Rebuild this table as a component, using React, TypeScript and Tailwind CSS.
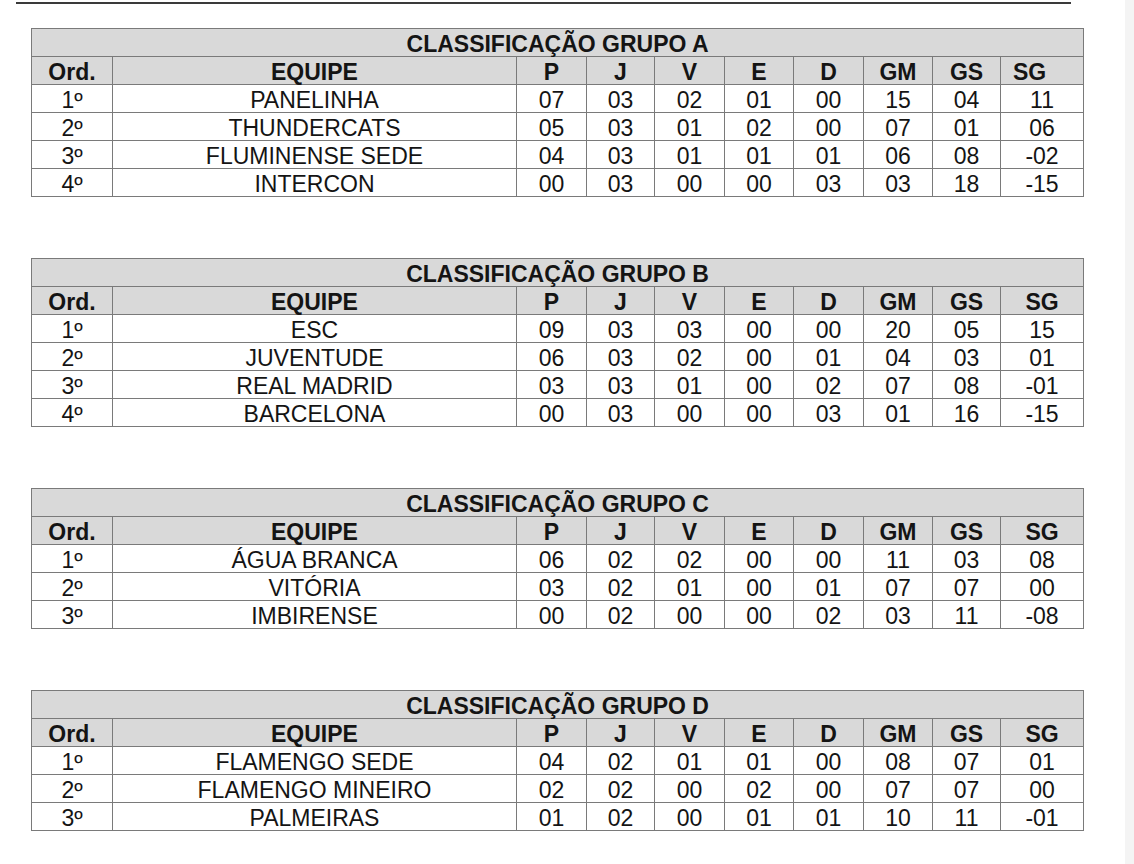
type Row = {
  team: string;
  stats: string[];
};

type Group = {
  name: string;
  rows: Row[];
};

const groups: Group[] = [
  {
    name: "A",
    rows: [
      { team: "PANELINHA", stats: ["07", "03", "02", "01", "00", "15", "04", "11"] },
      { team: "THUNDERCATS", stats: ["05", "03", "01", "02", "00", "07", "01", "06"] },
      { team: "FLUMINENSE SEDE", stats: ["04", "03", "01", "01", "01", "06", "08", "-02"] },
      { team: "INTERCON", stats: ["00", "03", "00", "00", "03", "03", "18", "-15"] },
    ],
  },
  {
    name: "B",
    rows: [
      { team: "ESC", stats: ["09", "03", "03", "00", "00", "20", "05", "15"] },
      { team: "JUVENTUDE", stats: ["06", "03", "02", "00", "01", "04", "03", "01"] },
      { team: "REAL MADRID", stats: ["03", "03", "01", "00", "02", "07", "08", "-01"] },
      { team: "BARCELONA", stats: ["00", "03", "00", "00", "03", "01", "16", "-15"] },
    ],
  },
  {
    name: "C",
    rows: [
      { team: "ÁGUA BRANCA", stats: ["06", "02", "02", "00", "00", "11", "03", "08"] },
      { team: "VITÓRIA", stats: ["03", "02", "01", "00", "01", "07", "07", "00"] },
      { team: "IMBIRENSE", stats: ["00", "02", "00", "00", "02", "03", "11", "-08"] },
    ],
  },
  {
    name: "D",
    rows: [
      { team: "FLAMENGO SEDE", stats: ["04", "02", "01", "01", "00", "08", "07", "01"] },
      { team: "FLAMENGO MINEIRO", stats: ["02", "02", "00", "02", "00", "07", "07", "00"] },
      { team: "PALMEIRAS", stats: ["01", "02", "00", "01", "01", "10", "11", "-01"] },
    ],
  },
];

const colWidths = [81, 404, 70, 68, 70, 69, 70, 69, 68, 83];
const statHeads = ["P", "J", "V", "E", "D", "GM", "GS", "SG"];

const cell = "border border-[#7a7a7a] h-[28px] p-0 pt-[3px] text-center align-top leading-[24px]";

function GroupTable({ group }: { group: Group }) {
  return (
    <table className="table-fixed border-collapse w-[1052px] text-[23px] text-[#141414]">
      <colgroup>
        {colWidths.map((w, i) => (
          <col key={i} style={{ width: w }} />
        ))}
      </colgroup>
      <thead>
        <tr className="bg-[#d9d9d9]">
          <th colSpan={10} className={cell + " font-bold"}>
            CLASSIFICAÇÃO GRUPO {group.name}
          </th>
        </tr>
        <tr className="bg-[#d9d9d9]">
          <th className={cell + " font-bold"}>Ord.</th>
          <th className={cell + " font-bold"}>EQUIPE</th>
          {statHeads.map((h) => (
            <th
              key={h}
              className={
                cell +
                " font-bold" +
                (h === "SG" && group.name === "A" ? " !text-left !pl-[12px]" : "")
              }
            >
              {h}
            </th>
          ))}
        </tr>
      </thead>
      <tbody>
        {group.rows.map((row, i) => (
          <tr key={row.team}>
            <td className={cell}>{i + 1}º</td>
            <td className={cell}>{row.team}</td>
            {row.stats.map((s, j) => (
              <td key={j} className={cell}>
                {s}
              </td>
            ))}
          </tr>
        ))}
      </tbody>
    </table>
  );
}

export default function App() {
  return (
    <div
      className="flex h-[864px] w-[1134px] overflow-hidden bg-white"
      style={{ fontFamily: '"Liberation Sans", Arial, sans-serif' }}
    >
      <main className="flex-1">
        <div className="ml-[16px] mt-[2px] h-[2px] w-[1055px] bg-[#3a3a3a]" />
        <div className="ml-[31px] mt-[24px] flex flex-col gap-[61px]">
          {groups.map((g) => (
            <GroupTable key={g.name} group={g} />
          ))}
        </div>
      </main>
      <aside className="w-[9px] bg-[#f4f4f4]" />
    </div>
  );
}
